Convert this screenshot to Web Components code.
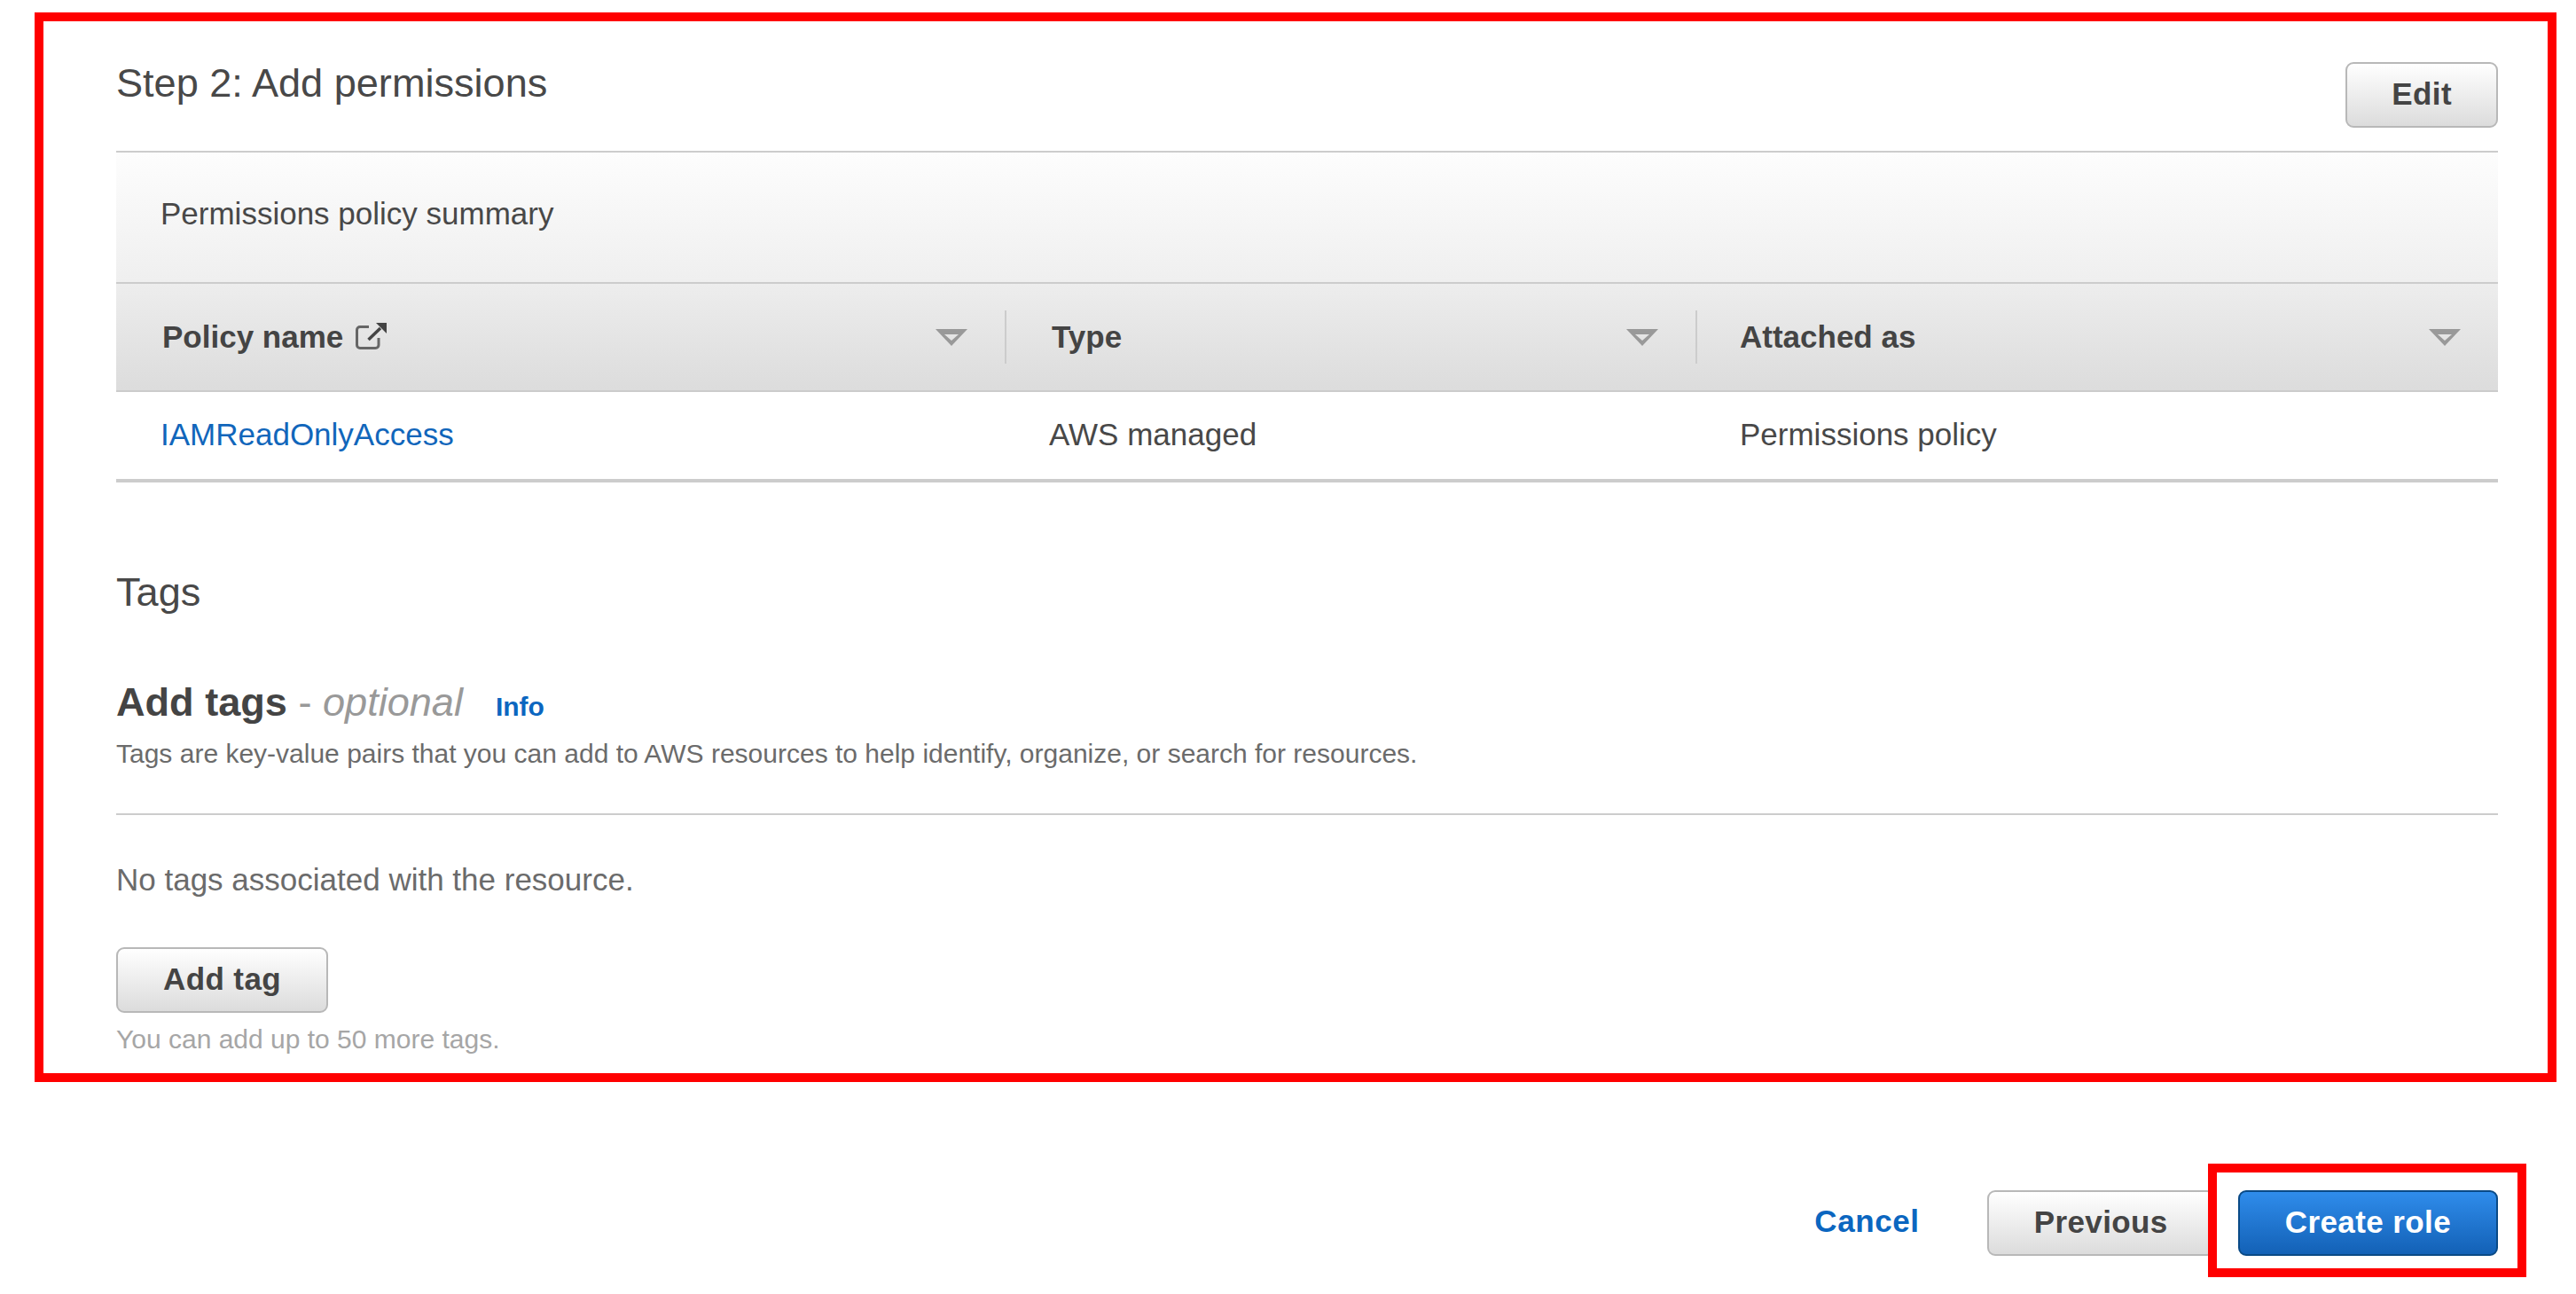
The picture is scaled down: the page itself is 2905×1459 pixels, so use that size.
<!DOCTYPE html>
<html lang="en">
<head>
<meta charset="utf-8">
<title>Create role</title>
<style>
  html, body { margin: 0; background: #fff; }
  body { font-family: "Liberation Sans", Arial, sans-serif; color: #484848; min-height: 1459px; }
</style>
</head>
<body>
<review-frame>
  <step-header>
    Step 2: Add permissions
    <aws-button slot="action" style="padding: 0 50px 2px">Edit</aws-button>
  </step-header>
  <policy-table caption="Permissions policy summary">
    <policy-head divider external>Policy name</policy-head>
    <policy-head divider>Type</policy-head>
    <policy-head last>Attached as</policy-head>
    <policy-cell link>IAMReadOnlyAccess</policy-cell>
    <policy-cell>AWS managed</policy-cell>
    <policy-cell>Permissions policy</policy-cell>
  </policy-table>
  <tags-editor></tags-editor>
</review-frame>
<wizard-actions>
  <a-link slot="cancel">Cancel</a-link>
  <aws-button slot="previous">Previous</aws-button>
  <callout-box slot="submit"><aws-button primary>Create role</aws-button></callout-box>
</wizard-actions>

<script>
// button grey ou azul
class AwsButton extends HTMLElement {
  constructor() {
    super();
    const shadow = this.attachShadow({ mode: "open" });
    shadow.innerHTML = `
      <style>
        :host{
          display: inline-flex;
          align-items: center;
          justify-content: center;
          box-sizing: border-box;
          height: 74px;
          padding: 0 51px 2px;
          border: 2px solid #b8b8b8;
          border-radius: 9px;
          background: linear-gradient(#ffffff, #dcdcdc);
          color: #444;
          font-size: 35px;
          font-weight: bold;
          letter-spacing: .4px;
          white-space: nowrap;
        }
        :host([primary]){
          border-color: #0a4a86;
          background: linear-gradient(#2f8ceb, #1361b6);
          color: #fff;
        }
      </style>
      <slot></slot>
    `;
  }
}
customElements.define("aws-button", AwsButton);

class ALink extends HTMLElement {
  constructor() {
    super();
    const shadow = this.attachShadow({ mode: "open" });
    shadow.innerHTML = `
      <style>
        :host{
          display: inline-block;
          color: #0b66c0;
          font-size: 35px;
          font-weight: bold;
          letter-spacing: .6px;
        }
      </style>
      <slot></slot>
    `;
  }
}
customElements.define("a-link", ALink);

// moldura vermelha grande em volta do passo
class ReviewFrame extends HTMLElement {
  constructor() {
    super();
    const shadow = this.attachShadow({ mode: "open" });
    shadow.innerHTML = `
      <style>
        :host{
          display: block;
          box-sizing: border-box;
          width: 2844px;
          height: 1206px;
          margin: 14px 0 0 39px;
          padding: 0 56px 0 82px;
          border: 10px solid #ff0000;
        }
      </style>
      <slot></slot>
    `;
  }
}
customElements.define("review-frame", ReviewFrame);

class StepHeader extends HTMLElement {
  constructor() {
    super();
    const shadow = this.attachShadow({ mode: "open" });
    shadow.innerHTML = `
      <style>
        :host{
          display: flex;
          justify-content: space-between;
          align-items: flex-start;
          box-sizing: border-box;
          height: 148px;
          padding-top: 43px;
          border-bottom: 2px solid #ccc;
          font-size: 45.1px;
          line-height: 54px;
          color: #484848;
        }
        ::slotted(aws-button){ margin-top: 3px; line-height: normal; }
      </style>
      <div><slot></slot></div>
      <slot name="action"></slot>
    `;
  }
}
customElements.define("step-header", StepHeader);

class PolicyTable extends HTMLElement {
  constructor() {
    super();
    const shadow = this.attachShadow({ mode: "open" });
    shadow.innerHTML = `
      <style>
        :host{ display: block; }
        .summary{
          display: flex;
          align-items: center;
          box-sizing: border-box;
          height: 146px;
          padding: 0 0 8px 50px;
          background: linear-gradient(#fdfdfd, #efefef);
          font-size: 35px;
          color: #484848;
        }
        .grid{
          display: grid;
          grid-template-columns: 1004fr 779fr 903fr;
          grid-template-rows: 124px 102px;
        }
      </style>
      <div class="summary"></div>
      <div class="grid"><slot></slot></div>
    `;
    shadow.querySelector(".summary").textContent = this.getAttribute("caption");
  }
}
customElements.define("policy-table", PolicyTable);

class PolicyHead extends HTMLElement {
  constructor() {
    super();
    const shadow = this.attachShadow({ mode: "open" });
    const icon = this.hasAttribute("external") ? `
      <svg class="ext" width="36" height="32" viewBox="0 0 36 32">
        <path d="M15 5.5H5a3.5 3.5 0 0 0-3.5 3.5V26a3.5 3.5 0 0 0 3.5 3.5H22.5a3.5 3.5 0 0 0 3.5-3.5V18" fill="none" stroke="#666" stroke-width="3"/>
        <path d="M14.5 20L28 7" fill="none" stroke="#444" stroke-width="3.5"/>
        <path d="M23 1H35V13Z" fill="#444"/>
      </svg>` : "";
    const divider = this.hasAttribute("divider") ? `<span class="divider"></span>` : "";
    shadow.innerHTML = `
      <style>
        :host{
          display: flex;
          align-items: center;
          box-sizing: border-box;
          padding: 0 42px 0 51px;
          border-top: 2px solid #ccc;
          border-bottom: 2px solid #ccc;
          background: linear-gradient(#ededed, #dcdcdc);
          font-size: 35px;
          font-weight: bold;
          color: #444;
        }
        :host([divider]){ padding-right: 0; }
        :host([external]){ padding-left: 52px; }
        :host([last]){ padding-left: 48px; }
        .ext{ margin-left: 14px; margin-top: -2px; }
        .sort{ margin-left: auto; }
        .divider{ width: 2px; height: 60px; margin-left: 42px; background: #ccc; }
        .label{ display: flex; align-items: center; }
      </style>
      <span class="label"><slot></slot>${icon}</span>
      <svg class="sort" width="36" height="19" viewBox="0 0 36 19">
        <path d="M0 0H36L18 19ZM10 6L18 13L26 6Z" fill="#999" fill-rule="evenodd"/>
      </svg>
      ${divider}
    `;
  }
}
customElements.define("policy-head", PolicyHead);

class PolicyCell extends HTMLElement {
  constructor() {
    super();
    const shadow = this.attachShadow({ mode: "open" });
    shadow.innerHTML = `
      <style>
        :host{
          display: flex;
          align-items: center;
          box-sizing: border-box;
          padding: 0 0 2px 48px;
          border-bottom: 4px solid #ccc;
          font-size: 35px;
          color: #484848;
        }
        :host([link]){ color: #1166bb; padding-left: 50px; }
      </style>
      <slot></slot>
    `;
  }
}
customElements.define("policy-cell", PolicyCell);

class TagsEditor extends HTMLElement {
  constructor() {
    super();
    const shadow = this.attachShadow({ mode: "open" });
    shadow.innerHTML = `
      <style>
        :host{ display: block; }
        .tags{ margin-top: 97px; font-size: 45.1px; line-height: 54px; color: #484848; }
        .add{ margin-top: 70px; font-size: 45.1px; line-height: 54px; }
        .add b{ color: #444; }
        .add .opt{ color: #999; }
        .add .info{ margin-left: 37px; color: #0b66c0; font-size: 30px; font-weight: bold; }
        .desc{ margin-top: 8px; font-size: 30px; line-height: 36px; color: #6b6b6b; }
        hr{ margin: 49px 0 0; height: 2px; border: 0; background: #ccc; }
        .none{ margin-top: 52px; font-size: 35px; line-height: 42px; color: #6b6b6b; }
        aws-button{ margin-top: 55px; display: inline-flex; }
        .limit{ margin-top: 12px; font-size: 30px; line-height: 36px; color: #a6a6a6; }
      </style>
      <div class="tags">Tags</div>
      <div class="add"><b>Add tags</b> <span class="opt">- <i>optional</i></span><span class="info">Info</span></div>
      <div class="desc">Tags are key-value pairs that you can add to AWS resources to help identify, organize, or search for resources.</div>
      <hr>
      <div class="none">No tags associated with the resource.</div>
      <aws-button>Add tag</aws-button>
      <div class="limit">You can add up to 50 more tags.</div>
    `;
  }
}
customElements.define("tags-editor", TagsEditor);

// caixa vermelha sobre o botao (fica por cima do layout)
class CalloutBox extends HTMLElement {
  constructor() {
    super();
    const shadow = this.attachShadow({ mode: "open" });
    shadow.innerHTML = `
      <style>
        :host{ display: inline-block; position: relative; }
        .box{
          position: absolute;
          left: -34px;
          right: -32px;
          top: -30px;
          bottom: -24px;
          border: 10px solid #ff0000;
          pointer-events: none;
        }
      </style>
      <slot></slot>
      <div class="box"></div>
    `;
  }
}
customElements.define("callout-box", CalloutBox);

class WizardActions extends HTMLElement {
  constructor() {
    super();
    const shadow = this.attachShadow({ mode: "open" });
    shadow.innerHTML = `
      <style>
        :host{
          display: flex;
          justify-content: flex-end;
          align-items: center;
          margin: 122px 88px 0 0;
          gap: 26px;
        }
        ::slotted(a-link){ margin-right: 50px; padding-bottom: 4px; }
      </style>
      <slot name="cancel"></slot>
      <slot name="previous"></slot>
      <slot name="submit"></slot>
    `;
  }
}
customElements.define("wizard-actions", WizardActions);
</script>
</body>
</html>
